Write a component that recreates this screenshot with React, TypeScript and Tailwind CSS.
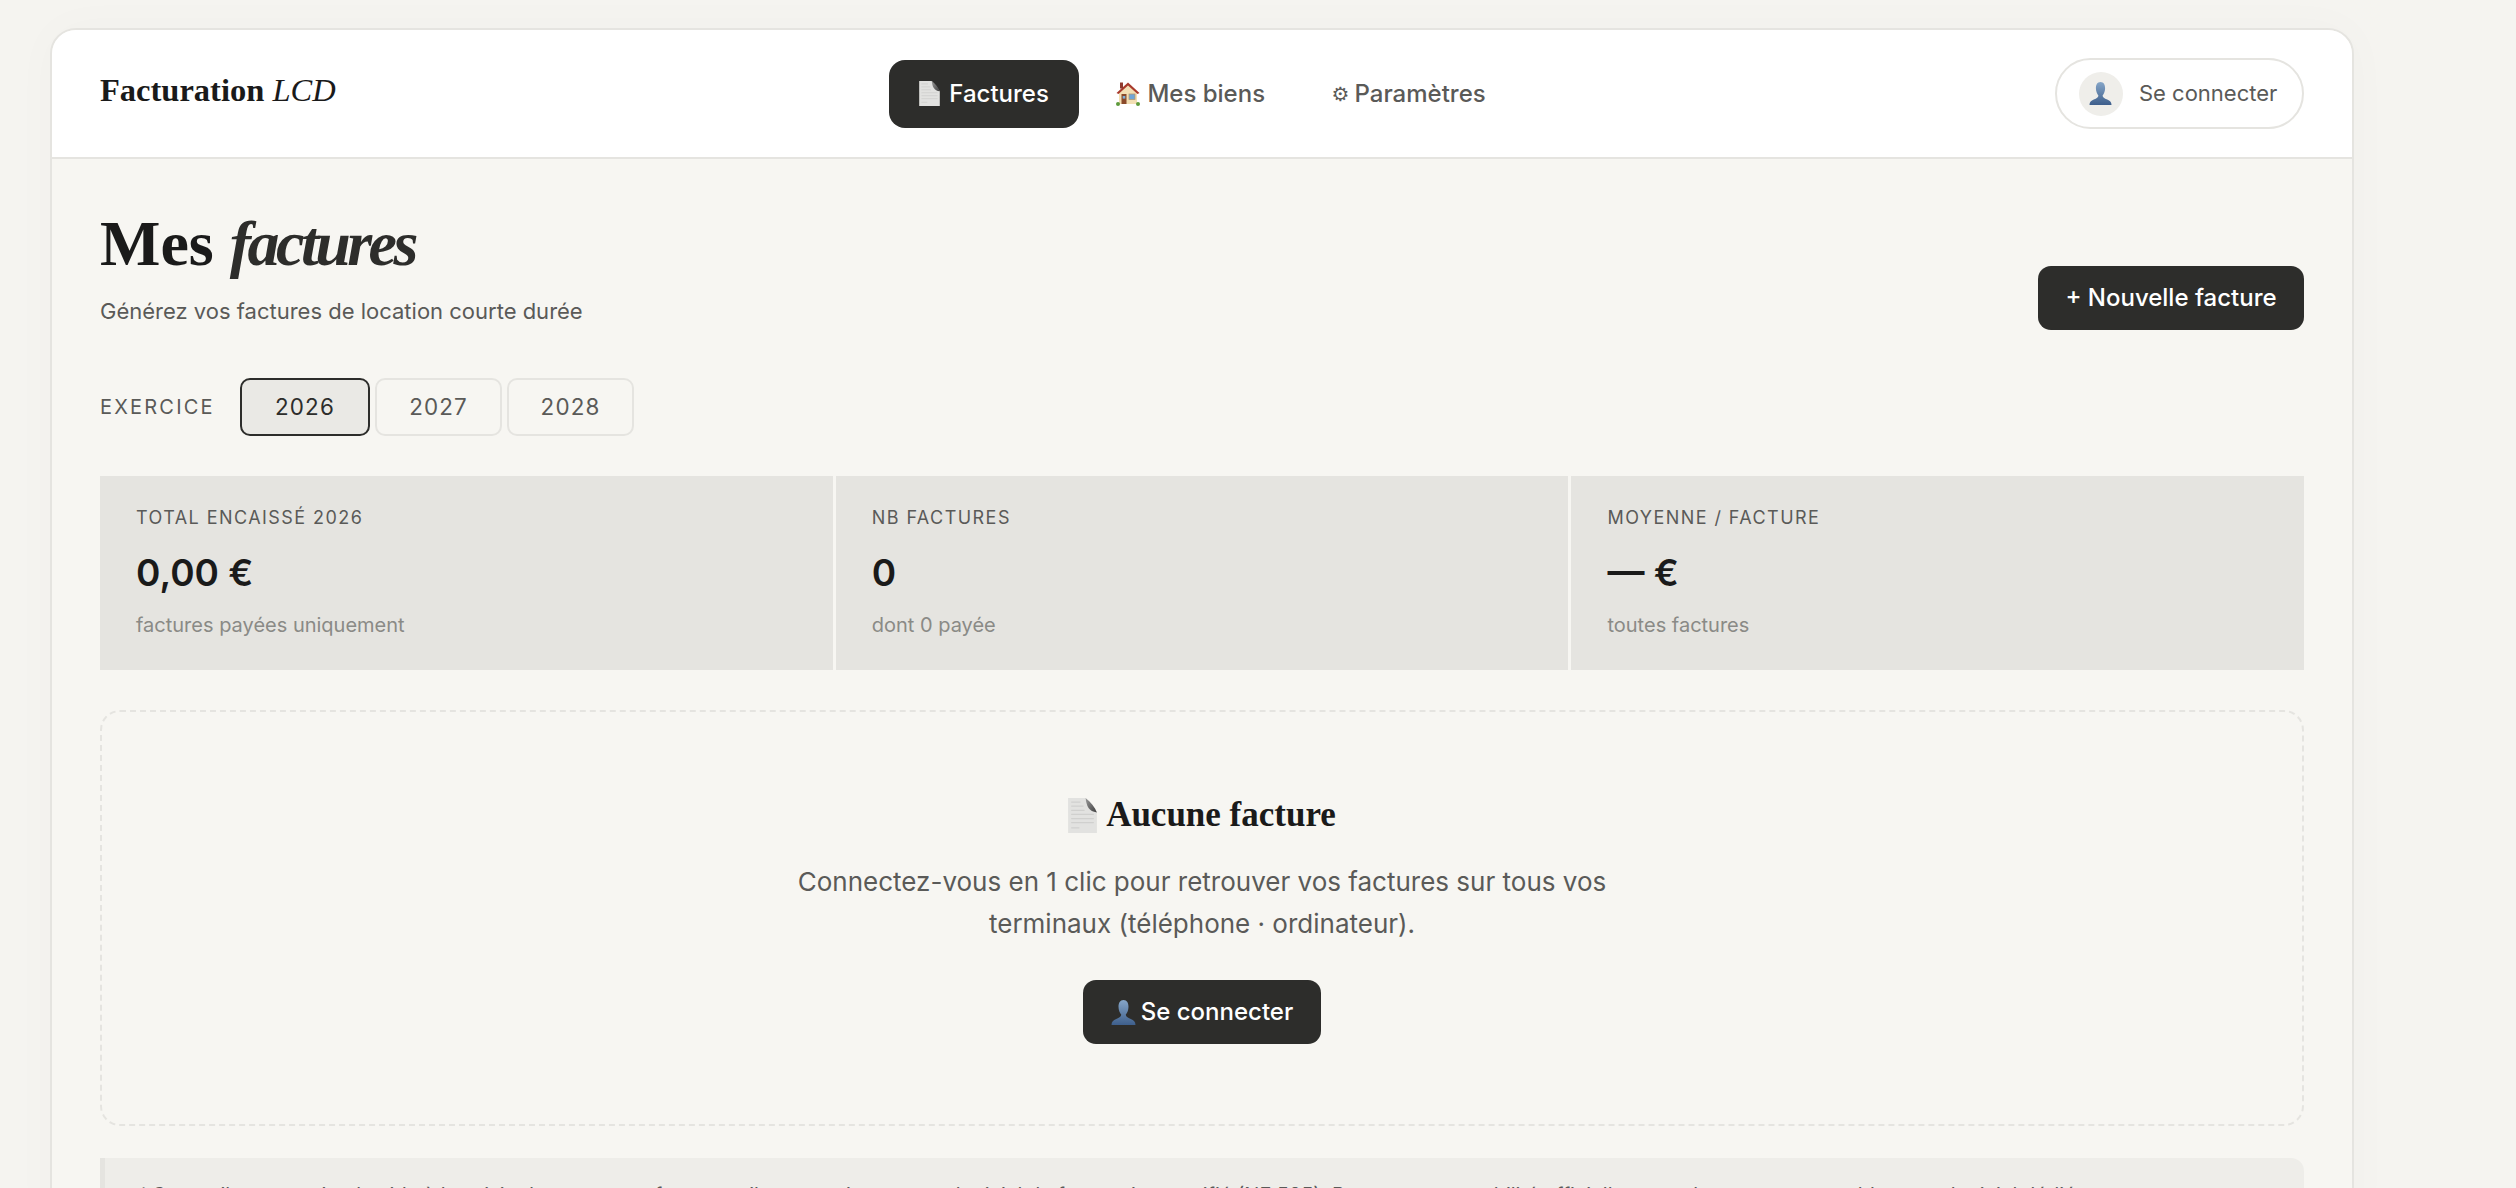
import { useId } from 'react';

const serif = "font-['Liberation_Serif',serif]";

const DocIcon = ({ className }: { className: string }) => {
  const id = useId();
  return (
    <svg viewBox="0 0 28 34" className={className}>
      <defs>
        <linearGradient id={id} x1="0" y1="0" x2="1" y2="1">
          <stop offset="0" stopColor="#9a9a9a" />
          <stop offset="1" stopColor="#3f3f3f" />
        </linearGradient>
      </defs>
      <path d="M0 0H17L28 14V34H0Z" fill="#e2e2e0" />
      <path d="M3 4h9M3 8h12M3 12h13M3 16h22M3 20h22M3 24h22M3 29h8" stroke="#d0d0ce" strokeWidth="1.2" />
      <path d="M17 0C18 8 20 13 28 14C26 9 22 4 17 0Z" fill={`url(#${id})`} />
    </svg>
  );
};

const HouseIcon = () => (
  <svg viewBox="0 0 24 25" className="w-[24px] h-[25px] shrink-0">
    <path d="M3 11L12 3L21 11V23H3Z" fill="#f3dfb4" />
    <path d="M0.5 12L12 1.5L23.5 12L21.5 13L12 4.5L2.5 13Z" fill="#a83a2c" />
    <rect x="4" y="1.5" width="3" height="6" fill="#8f3a2e" />
    <rect x="5.5" y="13" width="5" height="10" fill="#8a4a2a" />
    <rect x="6.7" y="15" width="2.6" height="2.6" fill="#7fb2dc" />
    <rect x="13" y="13" width="6" height="5.5" fill="#6fa6d6" stroke="#b49a70" strokeWidth="0.8" />
    <circle cx="2" cy="23" r="2" fill="#5e9a3c" />
    <circle cx="22" cy="23" r="2" fill="#5e9a3c" />
  </svg>
);

const UserIcon = ({ className }: { className: string }) => {
  const id = useId();
  return (
    <svg viewBox="0 0 24 24" className={className}>
      <defs>
        <linearGradient id={id} x1="0" y1="0" x2="0" y2="1">
          <stop offset="0" stopColor="#86a6c8" />
          <stop offset="1" stopColor="#3e5f8c" />
        </linearGradient>
      </defs>
      <path
        d="M12 0C8.6 0 7.2 3 7.2 6.5C7.2 10 8.6 12.6 9.8 14C9.8 16 8 17 5 18.2C2.2 19.3 0.5 20.8 0.5 24H23.5C23.5 20.8 21.8 19.3 19 18.2C16 17 14.2 16 14.2 14C15.4 12.6 16.8 10 16.8 6.5C16.8 3 15.4 0 12 0Z"
        fill={`url(#${id})`}
      />
    </svg>
  );
};

const StatCard = ({ label, value, sub }: { label: string; value: string; sub: string }) => (
  <div className="bg-[#e5e4e0] h-[194px] pl-[36px] pt-[31px]">
    <p className="text-[18px] leading-[22px] tracking-[0.08em] text-[#5a5a58]">{label}</p>
    <p className="mt-[21px] text-[37px] leading-[46px] font-semibold text-[#1a1a1a]">{value}</p>
    <p className="mt-[16px] text-[20px] leading-[26px] text-[#8a8a86]">{sub}</p>
  </div>
);

const YearButton = ({ year, active }: { year: string; active?: boolean }) => (
  <button
    className={
      active
        ? 'w-[130px] h-[58px] rounded-[10px] border-2 border-[#2d2d2b] bg-[#eae9e5] text-[22.4px] tracking-[0.05em] text-[#2d2d2b]'
        : 'w-[127px] h-[58px] rounded-[10px] border-2 border-[#e5e4e0] text-[22.4px] tracking-[0.05em] text-[#5a5a58]'
    }
  >
    {year}
  </button>
);

export default function App() {
  return (
    <div className="h-screen overflow-hidden bg-[#f5f4f0] pl-[50px] pt-[28px] font-['Inter',sans-serif]">
      <div className="w-[2304px] rounded-t-[26px] border-2 border-[#e5e4e0] bg-[#f7f6f2] shadow-[0_0_48px_rgba(0,0,0,0.025)]">
        <header className="flex items-center justify-between h-[129px] px-[48px] bg-white border-b-2 border-[#e5e4e0] rounded-t-[24px]">
          <div className={`${serif} w-[249px] mb-[8px] text-[32.5px] leading-[40px] font-bold text-[#1a1a1a] whitespace-nowrap`}>
            Facturation <em className="font-normal">LCD</em>
          </div>
          <nav className="flex items-center gap-[8.5px]">
            <a className="flex items-center gap-[9px] h-[68px] px-[30px] rounded-[16px] bg-[#2d2d2b] text-[24px] font-[450] text-white">
              <DocIcon className="w-[21px] h-[25px] shrink-0" />
              Factures
            </a>
            <a className="flex items-center gap-[7px] h-[68px] px-[29px] text-[24px] font-[450] text-[#5a5a58]">
              <HouseIcon />
              Mes biens
            </a>
            <a className="flex items-center gap-[5px] h-[68px] px-[29px] text-[24px] font-[450] text-[#5a5a58]">
              <span className="text-[20px] leading-none font-['DejaVu_Sans',sans-serif]">⚙</span>
              Paramètres
            </a>
          </nav>
          <button className="flex items-center gap-[16px] h-[71px] w-[249px] pl-[22px] rounded-full border-2 border-[#e5e4e0] bg-white text-[22px] text-[#5a5a58]">
            <span className="flex items-center justify-center w-[44px] h-[44px] rounded-full bg-[#efeeea]">
              <UserIcon className="w-[23px] h-[23px]" />
            </span>
            Se connecter
          </button>
        </header>

        <main className="px-[48px]">
          <div className="flex items-end justify-between pt-[49px]">
            <div className="pb-[5px]">
              <h1 className={`${serif} text-[64px] leading-[72px] font-bold text-[#1a1a1a]`}>
                Mes <em className="tracking-[-0.055em] text-[#2d2d2b]">factures</em>
              </h1>
              <p className="mt-[17px] text-[22px] leading-[28px] text-[#5a5a58]">Générez vos factures de location courte durée</p>
            </div>
            <button className="w-[266px] h-[64px] rounded-[13px] bg-[#2d2d2b] text-[24px] font-[450] text-white">+ Nouvelle facture</button>
          </div>

          <div className="flex items-center mt-[48px]">
            <span className="w-[140px] text-[20px] tracking-[0.11em] text-[#5a5a58]">EXERCICE</span>
            <div className="flex gap-[5px]">
              <YearButton year="2026" active />
              <YearButton year="2027" />
              <YearButton year="2028" />
            </div>
          </div>

          <div className="grid grid-cols-3 gap-[3.2px] mt-[40px]">
            <StatCard label="TOTAL ENCAISSÉ 2026" value="0,00 €" sub="factures payées uniquement" />
            <StatCard label="NB FACTURES" value="0" sub="dont 0 payée" />
            <StatCard label="MOYENNE / FACTURE" value="— €" sub="toutes factures" />
          </div>

          <div className="flex flex-col items-center mt-[40px] h-[416px] pt-[81px] rounded-[20px] border-2 border-dashed border-[#e5e4e0]">
            <h2 className={`${serif} flex items-center gap-[9px] text-[35px] leading-[44px] font-bold text-[#1a1a1a]`}>
              <DocIcon className="w-[29px] h-[35px] shrink-0" />
              Aucune facture
            </h2>
            <p className="mt-[24px] w-[832px] text-center text-[26px] leading-[41.6px] text-[#5a5a58]">
              Connectez-vous en 1 clic pour retrouver vos factures sur tous vos terminaux (téléphone · ordinateur).
            </p>
            <button className="flex items-center justify-center gap-[5px] mt-[36px] w-[238px] h-[64px] rounded-[13px] bg-[#2d2d2b] text-[24px] font-[450] text-white">
              <UserIcon className="w-[25px] h-[25px]" />
              Se connecter
            </button>
          </div>

          <div className="mt-[32px] pl-[36px] pr-[32px] pt-[21px] pb-[22px] rounded-r-[13px] border-l-[5px] border-[#e5e4e0] bg-[#eeede9] text-[20px] leading-[32px] text-[#5a5a58]">
            ℹ Cet outil est une simple aide à la saisie de toutes vos factures : il ne constitue pas un logiciel de facturation certifié (NF 525). Pour une comptabilité officielle, consultez votre comptable ou un logiciel dédié.
          </div>
        </main>
      </div>
    </div>
  );
}
